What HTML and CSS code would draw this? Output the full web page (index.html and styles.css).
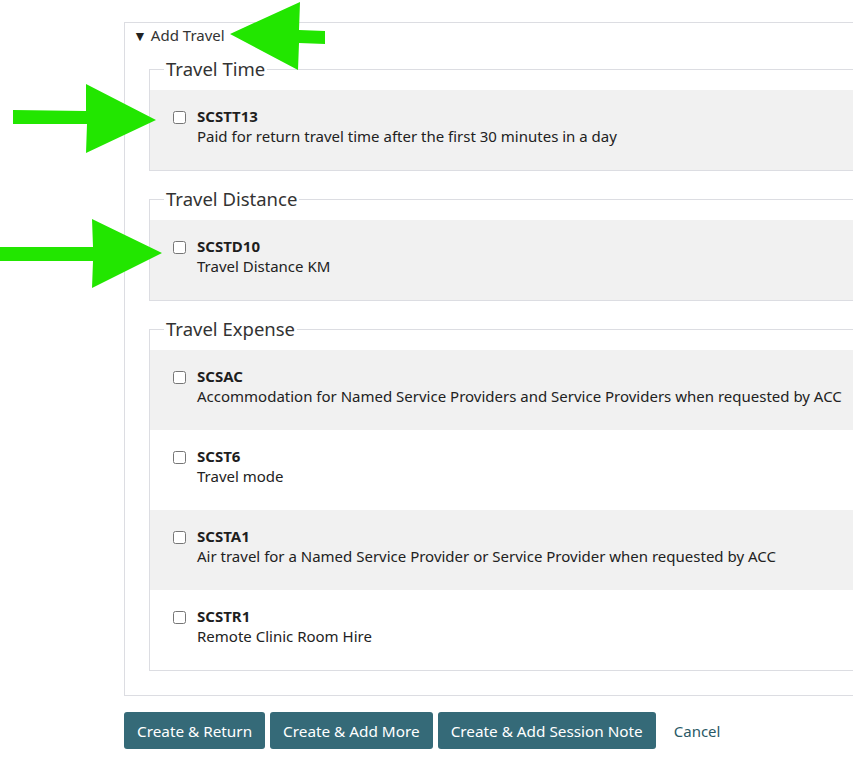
FILE: index.html
```html
<!DOCTYPE html>
<html lang="en">

<head>
    <meta charset="UTF-8">
    <meta name="viewport" content="width=device-width, initial-scale=1.0">
    <link rel="stylesheet" href="styles.css">
    <title>Add Travel</title>
</head>

<body>
    <div class="page">
        <details class="travel" open>
            <summary>Add Travel</summary>

            <fieldset class="group">
                <legend>Travel Time</legend>
                <label class="item">
                    <input type="checkbox">
                    <span class="item-text">
                        <b>SCSTT13</b>
                        <span>Paid for return travel time after the first 30 minutes in a day</span>
                    </span>
                </label>
            </fieldset>

            <fieldset class="group">
                <legend>Travel Distance</legend>
                <label class="item">
                    <input type="checkbox">
                    <span class="item-text">
                        <b>SCSTD10</b>
                        <span>Travel Distance KM</span>
                    </span>
                </label>
            </fieldset>

            <fieldset class="group">
                <legend>Travel Expense</legend>
                <label class="item">
                    <input type="checkbox">
                    <span class="item-text">
                        <b>SCSAC</b>
                        <span>Accommodation for Named Service Providers and Service Providers when requested by ACC</span>
                    </span>
                </label>
                <label class="item">
                    <input type="checkbox">
                    <span class="item-text">
                        <b>SCST6</b>
                        <span>Travel mode</span>
                    </span>
                </label>
                <label class="item">
                    <input type="checkbox">
                    <span class="item-text">
                        <b>SCSTA1</b>
                        <span>Air travel for a Named Service Provider or Service Provider when requested by ACC</span>
                    </span>
                </label>
                <label class="item">
                    <input type="checkbox">
                    <span class="item-text">
                        <b>SCSTR1</b>
                        <span>Remote Clinic Room Hire</span>
                    </span>
                </label>
            </fieldset>
        </details>

        <div class="actions">
            <button class="btn">Create &amp; Return</button>
            <button class="btn">Create &amp; Add More</button>
            <button class="btn">Create &amp; Add Session Note</button>
            <a href="javascript:;" class="cancel">Cancel</a>
        </div>
    </div>

    <!-- annotation arrows -->
    <svg class="marks" width="853" height="783" viewBox="0 0 853 783">
        <polygon points="230,34 300,2 299,30 325,31 325,44 299,43 298,70" />
        <polygon points="13,110 86,111 86,84 156,120 86,153 87,124 13,124" />
        <polygon points="0,247 93,247 92,219 162,253 92,288 93,261 0,261" />
    </svg>
</body>

</html>
```

FILE: styles.css
```css
html,
body {
    margin: 0;
    overflow: hidden;
}

body {
    font-family: "Noto Sans", "Open Sans", sans-serif;
    font-size: 15px;
    color: #333;
    background: #fff;
    position: relative;
}

.page {
    padding: 22px 0 0 124px;
}

.travel {
    border: 1px solid #dcdde2;
    border-right: 0;
    margin-right: -40px;
    padding: 0 0 24px 24px;
}

.travel summary {
    list-style: none;
    cursor: pointer;
    margin-left: -16px;
    padding-top: 2px;
    line-height: 20px;
    height: 26px;
}

.travel summary::before {
    content: "\25BC";
    font-size: 14px;
    margin-right: 4px;
    color: #222;
}

.group {
    border: 1px solid #dcdde2;
    border-right: 0;
    margin: 6px 0 0;
    padding: 9px 0 0;
}

.group + .group {
    margin-top: 16px;
}

.group legend {
    font-size: 18.5px;
    line-height: 24px;
    margin-left: 14px;
    padding: 0 2px;
    color: #333;
}

.item {
    display: flex;
    align-items: flex-start;
    height: 80px;
    box-sizing: border-box;
    padding: 16px 0 0 23px;
    line-height: 20px;
    color: #222;
}

.item:nth-child(even) {
    background: #f1f1f1;
}

.item input {
    width: 13px;
    height: 13px;
    margin: 5px 11px 0 0;
}

.item-text {
    display: flex;
    flex-direction: column;
    white-space: nowrap;
}

.item-text b {
    color: #1e1e1e;
}

.actions {
    display: flex;
    align-items: center;
    gap: 5px;
    margin-top: 16px;
}

.btn {
    font-family: inherit;
    font-size: 15.3px;
    color: #fff;
    background: #356a78;
    border: 0;
    border-radius: 3px;
    height: 37px;
    padding: 0 13px;
    cursor: pointer;
}

.cancel {
    color: #2a5966;
    text-decoration: none;
    margin-left: 13px;
}

.marks {
    position: absolute;
    left: 0;
    top: 0;
    pointer-events: none;
}

.marks polygon {
    fill: #22e600;
}
```
